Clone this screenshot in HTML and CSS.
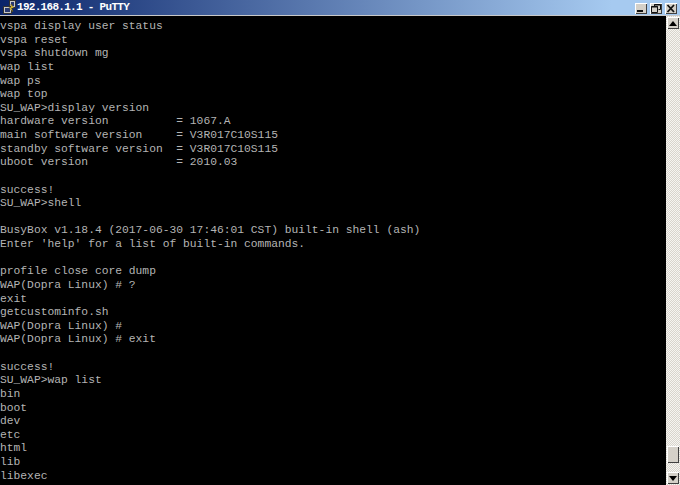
FILE: index.html
```html
<!DOCTYPE html>
<html lang="en">
<head>
<meta charset="utf-8">
<title>192.168.1.1 - PuTTY</title>
<link rel="stylesheet" href="styles.css">
</head>
<body>
<div class="window">
  <header class="titlebar">
    <svg class="appicon" width="15" height="15" viewBox="0 0 15 15">
      <rect x="7.5" y="0.5" width="6" height="7" fill="#c8c8c8" stroke="#333"/>
      <rect x="9" y="2" width="3" height="4" fill="#2a3a70"/>
      <rect x="1.5" y="6.5" width="8" height="7" fill="#c8c8c8" stroke="#333"/>
      <rect x="3" y="8" width="5" height="4" fill="#2a3a70"/>
      <path d="M9 4 L12 8 L9.5 8 L11 12 L7 7.5 L9 7.5 Z" fill="#f2d23a" stroke="#5a4a10" stroke-width="0.5"/>
    </svg>
    <span class="title">192.168.1.1 - PuTTY</span>
    <div class="controls">
      <button class="ctl" aria-label="Minimize"><svg width="12" height="11" viewBox="0 0 12 11"><rect x="2" y="7" width="6" height="2" fill="#111"/></svg></button>
      <button class="ctl" aria-label="Restore"><svg width="12" height="11" viewBox="0 0 12 11"><path d="M4.5 3V1.5H10.5V6.5H8.5M1.5 3.5H7.5V9.5H1.5Z" fill="none" stroke="#111"/><path d="M4 2H11M1 4H8" stroke="#111"/></svg></button>
      <button class="ctl close" aria-label="Close"><svg width="12" height="11" viewBox="0 0 12 11"><path d="M2.5 2L9 9M9 2L2.5 9" stroke="#111" stroke-width="1.8"/></svg></button>
    </div>
  </header>
  <div class="body">
    <pre class="terminal">vspa display user status
vspa reset
vspa shutdown mg
wap list
wap ps
wap top
SU_WAP&gt;display version
hardware version          = 1067.A
main software version     = V3R017C10S115
standby software version  = V3R017C10S115
uboot version             = 2010.03

success!
SU_WAP&gt;shell

BusyBox v1.18.4 (2017-06-30 17:46:01 CST) built-in shell (ash)
Enter 'help' for a list of built-in commands.

profile close core dump
WAP(Dopra Linux) # ?
exit
getcustominfo.sh
WAP(Dopra Linux) #
WAP(Dopra Linux) # exit

success!
SU_WAP&gt;wap list
bin
boot
dev
etc
html
lib
libexec</pre>
    <div class="scrollbar">
      <button class="arrow" aria-label="Scroll up"><svg width="8" height="5" viewBox="0 0 8 5"><path d="M4 0L8 5H0Z" fill="#000"/></svg></button>
      <div class="track"><div class="thumb"></div></div>
      <button class="arrow" aria-label="Scroll down"><svg width="8" height="5" viewBox="0 0 8 5"><path d="M0 0H8L4 5Z" fill="#000"/></svg></button>
    </div>
  </div>
</div>
</body>
</html>
```
FILE: styles.css
```css
* { box-sizing: border-box; }
html, body { margin: 0; padding: 0; height: 100%; background: #000; }
.window { width: 680px; height: 485px; display: flex; flex-direction: column; overflow: hidden; }
.titlebar {
  height: 16px; flex: none; display: flex; align-items: center; gap: 0; padding: 0 3px 0 2px;
  background: linear-gradient(90deg, #0a246a 0%, #a6caf0 90%, #a6caf0 100%);
  border-bottom: 1px solid #c8c8c8;
}
.appicon { flex: none; }
.title {
  color: #fff; font: bold 11px/15px "Liberation Mono", "DejaVu Sans Mono", monospace;
  letter-spacing: -0.7px; white-space: pre;
}
.controls { margin-left: auto; display: flex; gap: 3px; align-items: center; padding-top: 1px; }
.ctl {
  width: 12px; height: 11px; padding: 0; margin: 0; display: block; background: #d4d0c8;
  border: 0; box-shadow: inset 1px 1px 0 #fff, inset -1px -1px 0 #404040;
}
.ctl svg { display: block; }
.body { flex: 1; display: flex; min-height: 0; }
.terminal {
  flex: 1; margin: 0; padding: 4px 0 0 0; background: #000; color: #b4b4b4; overflow: hidden;
  font: 11.3px/13.63px "Liberation Mono", "Courier New", monospace;
}
.scrollbar {
  width: 14px; flex: none; display: flex; flex-direction: column; padding: 1px 1px 1px;
  background-color: #f2f0ea;
  background-image: repeating-conic-gradient(#d8d5cd 0 25%, #f6f5f1 0 50%);
  background-size: 2px 2px;
}
.arrow {
  height: 12px; width: 12px; flex: none; padding: 0; display: flex; align-items: center; justify-content: center;
  background: #d4d0c8; border: 0; box-shadow: inset 1px 1px 0 #fff, inset -1px -1px 0 #404040;
}
.track { flex: 1; display: flex; flex-direction: column; justify-content: flex-end; padding-bottom: 9px; }
.thumb { height: 17px; background: #d4d0c8; box-shadow: inset 1px 1px 0 #fff, inset -1px -1px 0 #404040; }
```
